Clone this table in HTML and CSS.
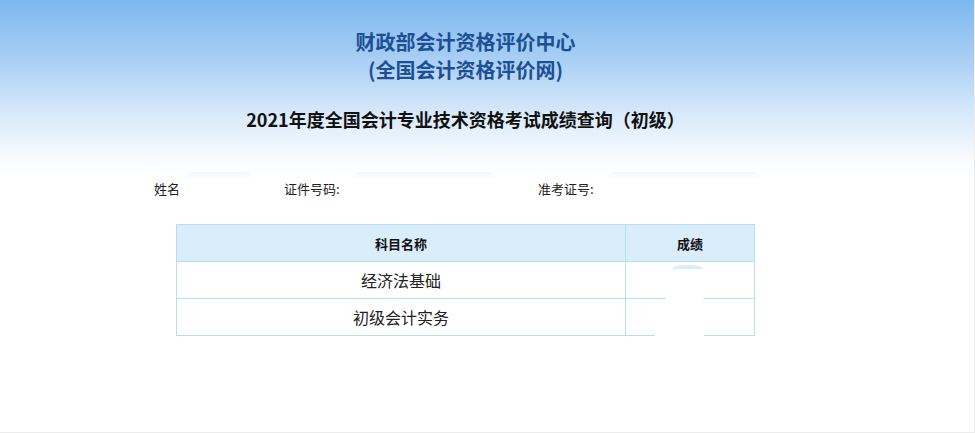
FILE: index.html
```html
<!DOCTYPE html>
<html lang="zh-CN">
<head>
<meta charset="utf-8">
<title>成绩查询</title>
<link rel="stylesheet" href="styles.css">
</head>
<body>
<div class="page">
  <div class="inner">
    <div class="org">
      <div class="org-line">财政部会计资格评价中心</div>
      <div class="org-line">(全国会计资格评价网)</div>
    </div>
    <h2 class="title">2021年度全国会计专业技术资格考试成绩查询（初级）</h2>
    <div class="info">
      <div class="field f-name"><span class="label">姓名</span><span class="mask m1"></span></div>
      <div class="field f-id"><span class="label">证件号码:</span><span class="mask m2"></span></div>
      <div class="field f-no"><span class="label">准考证号:</span><span class="mask m3"></span></div>
    </div>
    <div class="table-wrap">
      <table class="scores">
        <thead>
          <tr><th class="c-subject">科目名称</th><th class="c-score">成绩</th></tr>
        </thead>
        <tbody>
          <tr><td>经济法基础</td><td></td></tr>
          <tr><td>初级会计实务</td><td></td></tr>
        </tbody>
      </table>
      <span class="blot-cap"></span>
      <span class="blot"></span>
    </div>
  </div>
</div>
</body>
</html>
```
FILE: styles.css
```css
html, body {
  margin: 0;
  padding: 0;
  background: #fff;
}
body {
  font-family: "Noto Sans CJK SC", "Noto Sans", sans-serif;
  color: #222;
}
.page {
  width: 974px;
  height: 432px;
  border-right: 1px solid #ececec;
  border-bottom: 1px solid #ececec;
  background: linear-gradient(to bottom, #7db8ee 0px, #a9cff4 60px, #d9eafa 115px, #f6fafe 155px, #ffffff 175px);
}
.inner {
  width: 931px;
  padding-top: 28px;
  display: flex;
  flex-direction: column;
  align-items: center;
}
.org {
  text-align: center;
  color: #1d4f95;
  font-size: 20px;
  font-weight: bold;
  line-height: 28px;
}
.title {
  margin: 22px 0 0 0;
  font-size: 18px;
  font-weight: bold;
  line-height: 26px;
  color: #111;
}
.info {
  position: relative;
  width: 931px;
  height: 40px;
  margin-top: 42px;
  font-size: 13px;
  color: #222;
}
.field {
  position: absolute;
  top: 0;
  display: flex;
  align-items: flex-start;
}
.f-name { left: 154px; }
.f-id { left: 284px; }
.f-no { left: 538px; }
.label {
  margin-top: 6px;
  line-height: 18px;
}
.mask {
  display: block;
  height: 8px;
  margin-top: -2px;
  border-radius: 8px 8px 0 0;
  background: linear-gradient(to bottom, #f2f8fe, #ffffff);
}
.m1 { width: 68px; margin-left: 5px; }
.m2 { width: 144px; margin-left: 12px; }
.m3 { width: 156px; margin-left: 12px; }
.table-wrap {
  position: relative;
  margin-top: 10px;
}
.scores {
  border-collapse: collapse;
  width: 579px;
  table-layout: fixed;
}
.scores th, .scores td {
  border: 1px solid #b8def2;
  height: 36px;
  padding: 0;
  text-align: center;
}
.scores th {
  background: #d9eefa;
  font-size: 13px;
  font-weight: bold;
  color: #111;
}
.scores td {
  font-size: 16px;
  color: #222;
}
.c-subject { width: 448px; }
.blot-cap {
  position: absolute;
  left: 497px;
  top: 41px;
  width: 29px;
  height: 6px;
  border-radius: 50% 50% 0 0;
  background: #d9eefa;
}
.blot {
  position: absolute;
  left: 477px;
  top: 45px;
  width: 51px;
  height: 72px;
  background: #fff;
  clip-path: polygon(42% 0, 98% 0, 100% 100%, 0 100%);
}
```
